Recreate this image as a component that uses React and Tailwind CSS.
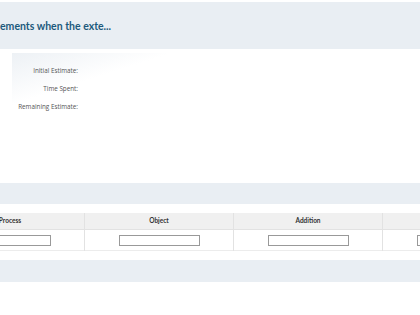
export default function App() {
  const cols = ["Process", "Object", "Addition", ""];

  return (
    <div className="w-[420px] h-[315px] overflow-hidden bg-white font-['Lato','Open_Sans',sans-serif]">

      {/* HEADER BAND */}

      <div className="mt-[2px] h-[47px] bg-[#e9eef3] flex items-center">
        <h1 className="text-[10.5px] font-bold text-[#1d5a7c] whitespace-nowrap leading-none pt-[2px]">
          ements when the exte...
        </h1>
      </div>

      {/* ESTIMATES */}

      <div className="ml-[12px] mt-[4px] w-[160px] h-[52px] bg-gradient-to-br from-[#edf1f5] via-white to-white pt-[14px]">
        <div className="w-[66px] flex flex-col items-end gap-[10px] font-['Open_Sans',sans-serif] text-[6.3px] leading-[8px] text-[#555]">
          <span>Initial Estimate:</span>
          <span>Time Spent:</span>
          <span className="whitespace-nowrap">Remaining Estimate:</span>
        </div>
      </div>

      {/* TABLE BAND */}

      <div className="mt-[78px] h-[21px] bg-[#e9eef3]" />

      <div className="mt-[9px] -ml-[64px] w-[596px] grid grid-cols-4">
        {cols.map((c, idx) => (
          <div key={idx} className="flex flex-col border-r border-[#e2e2e2]">
            <div className="h-[17px] bg-[#f0f0f0] border-b border-[#e2e2e2] flex items-center justify-center text-[6.5px] font-bold text-[#333]">
              {c}
            </div>
            <div className="h-[21px] border-b border-[#ececec] flex items-center justify-center">
              <div className="w-[81px] h-[11px] border border-[#999] bg-white" />
            </div>
          </div>
        ))}
      </div>

      {/* BOTTOM BAND */}

      <div className="mt-[9px] h-[22px] bg-[#e9eef3]" />

    </div>
  );
}
